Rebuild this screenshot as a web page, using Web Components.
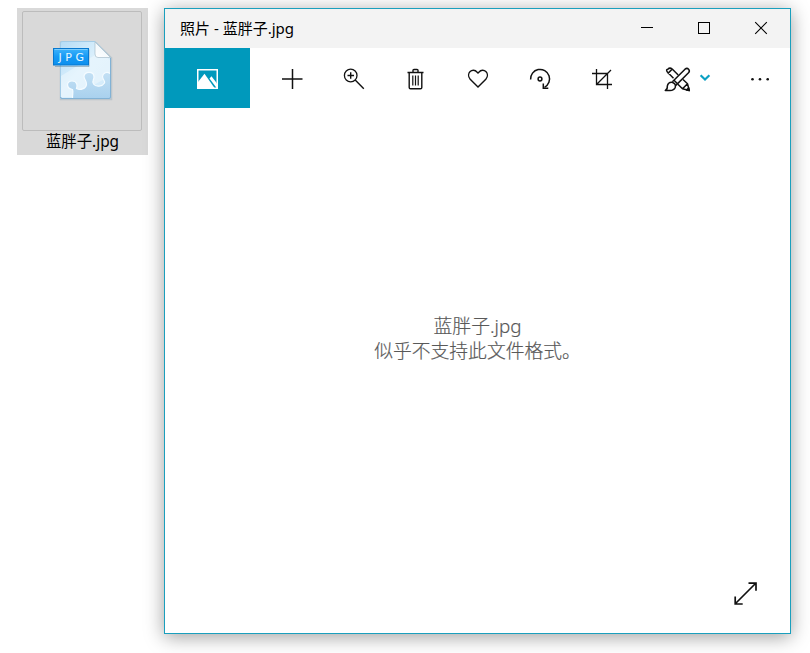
<!DOCTYPE html>
<html lang="zh-CN">
<head>
<meta charset="utf-8">
<title>照片</title>
<style>
html,body{margin:0;background:#fff}
body{width:810px;height:653px;overflow:hidden;font-family:"Noto Sans","Noto Sans CJK SC",sans-serif;color:#000}
</style>
</head>
<body>
<photo-desktop></photo-desktop>
<script>
const define = (name, html) => {
  const t = document.createElement('template');
  t.innerHTML = html;
  customElements.define(name, class extends HTMLElement {
    constructor() {
      super();
      this.attachShadow({mode: 'open'}).append(t.content.cloneNode(true));
    }
  });
};

define('jpg-icon', `
<style>:host{display:block;width:75px;height:70px}svg{display:block}</style>
<svg width="75" height="70" viewBox="45 35 75 70">
  <defs>
    <linearGradient id="p" x1="0" y1="0" x2="1" y2="1"><stop offset="0" stop-color="#b4dcf6"/><stop offset=".45" stop-color="#daeffc"/><stop offset="1" stop-color="#d2eafa"/></linearGradient>
    <linearGradient id="z" x1="0" y1="0" x2="0" y2="1"><stop offset="0" stop-color="#c3e0f4"/><stop offset="1" stop-color="#a9d1ee"/></linearGradient>
    <linearGradient id="f" x1="0" y1="1" x2="1" y2="0"><stop offset="0" stop-color="#fff"/><stop offset=".5" stop-color="#f4f9fc"/><stop offset="1" stop-color="#c5d5df"/></linearGradient>
    <linearGradient id="l" x1="0" y1="0" x2="0" y2="1"><stop offset="0" stop-color="#3fb4fb"/><stop offset=".5" stop-color="#169af5"/><stop offset="1" stop-color="#0d8fee"/></linearGradient>
  </defs>
  <path d="M61 42.5H95L111 58V99H61Z" fill="none" stroke="#9fb3c0" stroke-opacity=".5" stroke-width="2.5"/>
  <path d="M62 41.5H95L110.500 57.500V97Q110.500 98.500 109 98.500H62Q60.500 98.500 60.500 97V43Q60.500 41.500 62 41.500Z" fill="url(#p)" stroke="#a3cce7"/>
  <path d="M61 76L100 52L110 60V76L72 97H61Z" fill="#f1fafe" opacity=".5"/>
  <path d="M72.500 98C72.500 94 73.500 91.500 72.500 89.500C66 88.500 66 81 72 81C77.500 81 77.500 86 76.500 88.500C80 90.500 86 89 86.500 84.500C87 81 84 79.500 84 76.500C84.500 71 94 71 94 77C94 80 91.500 81.500 93.500 84C96 87.500 102.500 86.500 104.500 83C105.500 81 102.500 79.500 102.500 76.500C103 72.500 107 71.500 110 73.500V98Z" fill="url(#z)"/>
  <path d="M72.500 98C72.500 94 73.500 91.500 72.500 89.500C66 88.500 66 81 72 81C77.500 81 77.500 86 76.500 88.500C80 90.500 86 89 86.500 84.500C87 81 84 79.500 84 76.500C84.500 71 94 71 94 77C94 80 91.500 81.500 93.500 84C96 87.500 102.500 86.500 104.500 83C105.500 81 102.500 79.500 102.500 76.500C103 72.500 107 71.500 110 73.500" fill="none" stroke="#f4fbff" stroke-width="1.200"/>
  <path d="M60.500 97Q60.500 98.500 62 98.500H109Q110.500 98.500 110.500 97V58" fill="none" stroke="#82b2d5"/>
  <path d="M95 42V54Q95 57.500 98 57.500H110.500Z" fill="url(#f)" stroke="#a7bdca" stroke-width=".7"/>
  <path d="M55 66.500H89V49.500" fill="none" stroke="#628398" stroke-opacity=".5"/>
  <rect x="53.500" y="48.500" width="35" height="16.500" fill="url(#l)" stroke="#0878ce"/>
  <path d="M54.500 49.500H87.500" stroke="#7ccdfe"/>
  <text x="58.500" y="61" font-family="DejaVu Sans" font-size="11" textLength="25.500" lengthAdjust="spacing" fill="#e8f8ff">JPG</text>
</svg>`);

define('file-tile', `
<style>
:host{display:block;box-sizing:border-box;width:131px;height:147px;padding:3px 5px 0;background:#d9d9d9;text-align:center}
.frame{box-sizing:border-box;width:120px;height:120px;border:1px solid #bcbcbc;border-radius:2px;padding:23px 0 0 22px}
.name{font-size:15.400px;line-height:20px;padding-top:1px;white-space:nowrap}
</style>
<div class="frame"><jpg-icon></jpg-icon></div><div class="name"><slot></slot></div>`);

define('title-bar', `
<style>
:host{display:flex;height:39px;background:#f3f3f3;align-items:center;font-size:15px}
.t{flex:1;padding:0 0 3px 15px;white-space:nowrap}
svg{display:block;flex:none}
</style>
<div class="t"><slot></slot></div>
<svg width="171" height="39" viewBox="619 9 171 39" fill="none" stroke="#000">
  <path d="M641 27.500H653"/><rect x="698.500" y="22.500" width="11" height="11"/><path d="M755.200 22.200L766.800 33.800M766.800 22.200L755.200 33.800" stroke-width="1.100"/>
</svg>`);

define('tool-bar', `
<style>
:host{display:flex;height:60px}
svg{display:block;flex:none;fill:none;stroke:#111;stroke-width:1.5}
.tab{background:#0099bc;margin-right:11px}
</style>
<svg class="tab" width="85" height="60" viewBox="165 48 85 60">
  <rect x="197.750" y="69.750" width="19.500" height="18.500" stroke="#fff"/>
  <path d="M198 82L204.500 73.800L214.500 88H198Z" fill="#fff" stroke="none"/>
  <path d="M209.500 78.500L211.500 76.300L217 83.500V88.500Z" fill="#fff" stroke="none"/>
</svg>
<svg width="62" height="60" viewBox="261 48 62 60"><path d="M282 79H302.500M292.500 69V89"/></svg>
<svg width="62" height="60" viewBox="323 48 62 60"><circle cx="350.700" cy="75.500" r="6.300" stroke-width="1.300"/><path d="M347.500 75.500H354M350.700 72.300V78.800M355.200 80L363.800 88.700" stroke-width="1.400"/></svg>
<svg width="62" height="60" viewBox="385 48 62 60"><path d="M407.500 72.500H423.500M413 72V70.300Q413 69.500 414 69.500H417Q418 69.500 418 70.300V72M409.200 72.500V87.500Q409.200 88.700 410.500 88.700H420.500Q421.800 88.700 421.800 87.500V72.500" stroke-width="1.400"/><path d="M412.800 75.500V85.500M415.500 75.500V85.500M418.200 75.500V85.500" stroke-width="1.200"/></svg>
<svg width="62" height="60" viewBox="447 48 62 60"><path d="M478 87L470.200 79.200C465.400 73.500 472.500 66.800 477.200 72.200L478 73L478.800 72.200C483.500 66.800 490.600 73.500 485.800 79.200Z" stroke-width="1.400"/></svg>
<svg width="62" height="60" viewBox="509 48 62 60"><path d="M530.600 79.500A9.500 9.500 0 1 1 544.500 87.300"/><circle cx="540" cy="79" r="1.900"/><path d="M543.300 83.500V88.200H548.300"/></svg>
<svg width="62" height="60" viewBox="571 48 62 60"><path d="M596.500 69V84.500H612M592 73.500H607.500V89M596.500 84.500L611 70" stroke-width="1.300"/></svg>
<svg width="62" height="60" viewBox="645 48 62 60" style="margin-left:12px;margin-right:-8px">
  <g stroke-linejoin="round">
  <path d="M673.500 78.200L667.600 72.300Q665.500 69.500 667.800 69.200Q669.800 67.200 672.200 69L678.200 75M667.700 73.600L672.600 68.700"/>
  <path d="M683 79.500L687.500 83.700L689.300 90.600L682.500 88.800L677.900 84.200M682.500 88.800L687.500 83.700" />
  <path d="M689.300 90.600L688.700 87.800L686.500 90Z" fill="#111"/>
  <path d="M672.400 81.800L685 69.200Q687 67.600 688.600 69.200Q690.200 71 688.500 72.800L675.900 85.400M674 80.200L677.500 83.800"/>
  <path d="M665.300 90.500Q667.700 89.500 667.300 86.200Q668 82 672 82.200Q676.300 83.500 675.300 87.200Q674 90.500 670 90.500Z"/>
  </g>
</svg>
<svg width="32" height="60" viewBox="699 48 32 60"><path d="M700.600 75.300L705 79.500L709.400 75.300" stroke="#0ba0c2" stroke-width="2.200"/></svg>
<svg width="59" height="60" viewBox="731 48 59 60"><g fill="#111" stroke="none"><circle cx="752.500" cy="79.200" r="1.300"/><circle cx="760" cy="79.200" r="1.300"/><circle cx="767.700" cy="79.200" r="1.300"/></g></svg>`);

define('photo-viewer', `
<style>
:host{flex:1;display:flex;flex-direction:column;min-height:0}
.msg{flex:1;padding:206px 0 0 0;text-align:center;font-size:18.800px;line-height:25px;color:#555;font-weight:300;-webkit-text-stroke:.2px #666;white-space:nowrap}
svg{display:block;align-self:flex-end;margin:0 30px 25px 0}
</style>
<div class="msg"><slot></slot></div>
<svg width="30" height="30" viewBox="730 578 30 30" fill="none" stroke="#111" stroke-width="1.700"><path d="M735.500 603.500L756 583M748.500 583.200H756V590.700M735.200 596.500V604H742.700"/></svg>`);

define('photo-window', `
<style>
:host{display:flex;flex-direction:column;box-sizing:border-box;width:627px;height:626px;border:1px solid #1a9fbd;background:#fff;box-shadow:0 3px 18px rgba(0,0,0,.38)}
</style>
<title-bar>照片 - 蓝胖子.jpg</title-bar><tool-bar></tool-bar>
<photo-viewer><slot></slot></photo-viewer>`);

define('photo-desktop', `
<style>:host{display:flex;align-items:flex-start;gap:16px;padding:8px 0 0 17px}file-tile,photo-window{flex:none}</style>
<file-tile>蓝胖子.jpg</file-tile>
<photo-window><div>蓝胖子.jpg</div><div>似乎不支持此文件格式。</div></photo-window>`);
</script>
</body>
</html>
